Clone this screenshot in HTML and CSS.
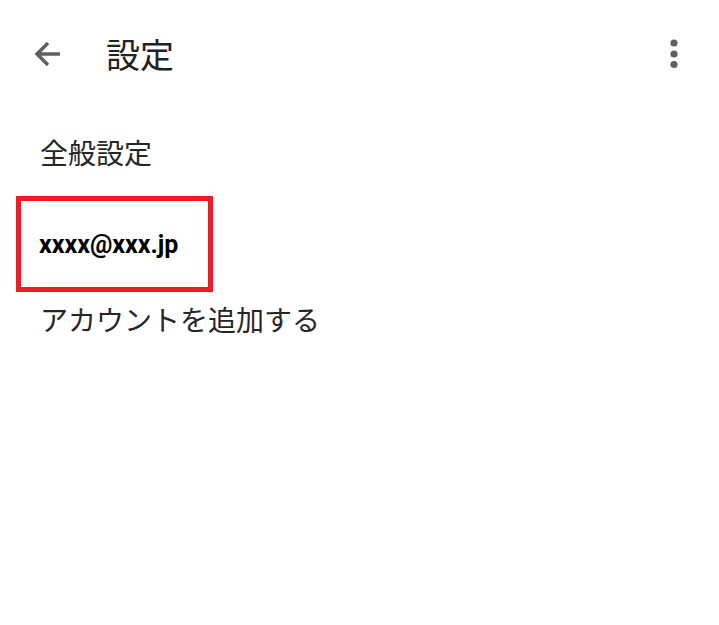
FILE: index.html
```html
<!DOCTYPE html>
<html lang="ja">
<head>
<meta charset="utf-8">
<link rel="stylesheet" href="styles.css">
</head>
<body>
<div class="app">
  <header class="topbar">
    <svg class="back" width="28" height="28" viewBox="0 0 28 28"><path d="M26 14H4M14 3L3 14l11 11" fill="none" stroke="#5f5f5f" stroke-width="3.4"/></svg>
    <h1 class="title">設定</h1>
    <svg class="more" width="10" height="30" viewBox="0 0 10 30"><circle cx="5" cy="4" r="3.6" fill="#5f5f5f"/><circle cx="5" cy="15" r="3.6" fill="#5f5f5f"/><circle cx="5" cy="25.5" r="3.6" fill="#5f5f5f"/></svg>
  </header>
  <ul class="list">
    <li class="item">全般設定</li>
    <li class="item account"><span class="email">xxxx@xxx.jp</span></li>
    <li class="item">アカウントを追加する</li>
  </ul>
</div>
</body>
</html>
```
FILE: styles.css
```css
html, body {
  margin: 0;
  padding: 0;
  background: #ffffff;
}
body {
  font-family: "Noto Sans CJK JP", "Noto Sans", sans-serif;
  color: #212121;
}
.app {
  width: 719px;
  height: 625px;
}
.topbar {
  display: flex;
  align-items: center;
  height: 108px;
  padding: 0 40px 0 34px;
  box-sizing: border-box;
}
.back {
  flex: none;
}
.title {
  margin: 0 0 0 44px;
  font-size: 34px;
  font-weight: 400;
  line-height: 1;
  flex: 1;
  color: #222222;
}
.more {
  flex: none;
}
.list {
  list-style: none;
  margin: 0;
  padding: 0;
}
.item {
  font-size: 28px;
  line-height: 1;
  padding-left: 40px;
  color: #262626;
}
.item:first-child {
  padding-top: 30px;
}
.account {
  margin: 30px 0 13px 16px;
  width: 197px;
  height: 96px;
  box-sizing: border-box;
  border: 5px solid #ee1c25;
  display: flex;
  align-items: center;
  padding-left: 18px;
}
.email {
  font-family: Roboto, "Liberation Sans", sans-serif;
  font-weight: 700;
  font-size: 25px;
  color: #000000;
}
```
